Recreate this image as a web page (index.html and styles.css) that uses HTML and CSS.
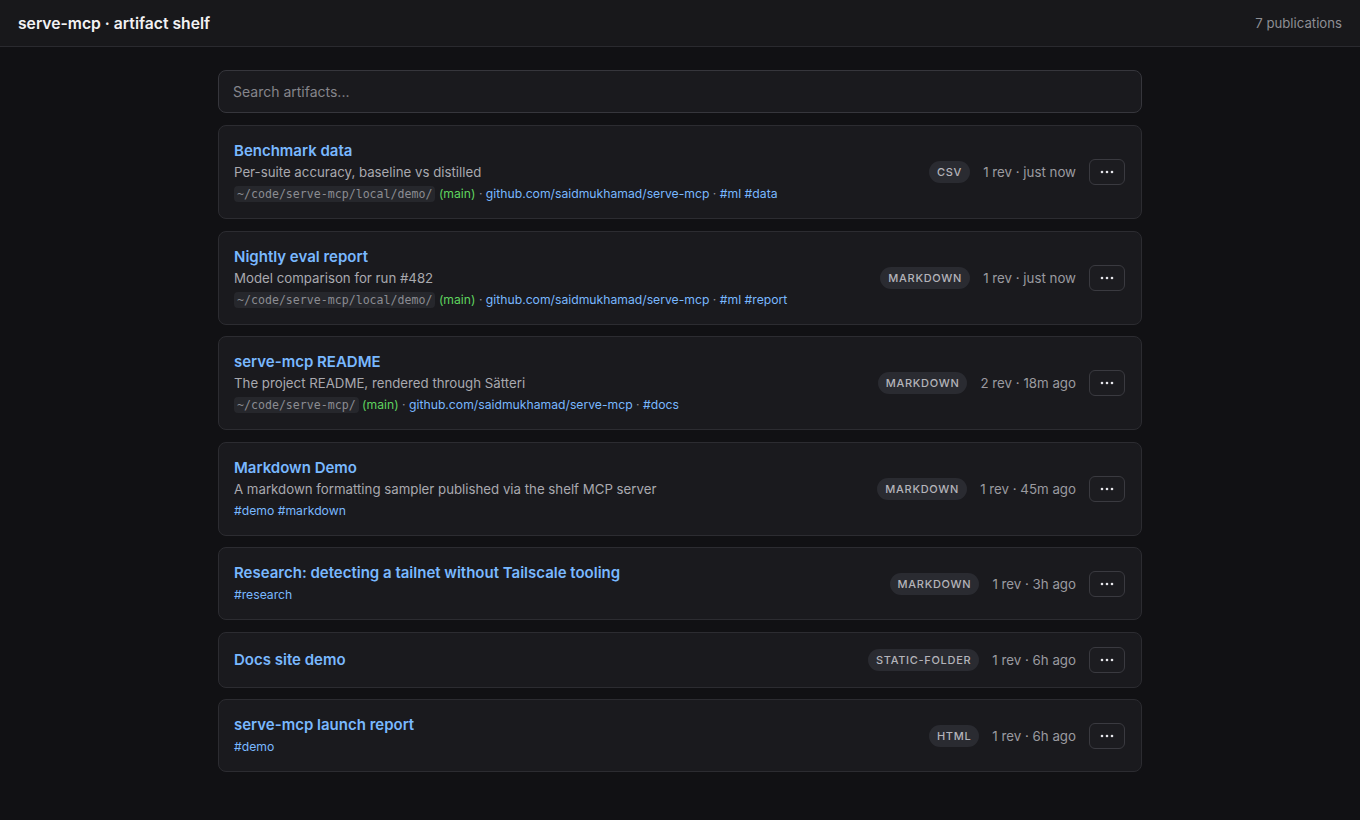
FILE: index.html
```html
<!DOCTYPE html>
<html>

<head>
	<meta charset="utf-8">
	<meta name="viewport" content="width=device-width, initial-scale=1">
	<title>serve-mcp · artifact shelf</title>
	<link rel="stylesheet" href="styles.css">
</head>

<body>
	<header class="topbar">
		<div class="brand">serve-mcp · artifact shelf</div>
		<div class="count">7 publications</div>
	</header>

	<main class="shelf">
		<input class="search" type="text" placeholder="Search artifacts...">

		<div class="card">
			<div class="info">
				<a class="title" href="#">Benchmark data</a>
				<div class="desc">Per-suite accuracy, baseline vs distilled</div>
				<div class="meta">
					<code class="path">~/code/serve-mcp/local/demo/</code>
					<span class="branch">(main)</span>
					<span class="sep">·</span>
					<a href="#">github.com/saidmukhamad/serve-mcp</a>
					<span class="sep">·</span>
					<a href="#">#ml</a> <a href="#">#data</a>
				</div>
			</div>
			<div class="side">
				<span class="kind">csv</span>
				<span class="when">1 rev · just now</span>
				<button class="more"><svg width="14" height="4" viewBox="0 0 14 4"><circle cx="2" cy="2" r="1.3"/><circle cx="7" cy="2" r="1.3"/><circle cx="12" cy="2" r="1.3"/></svg></button>
			</div>
		</div>

		<div class="card">
			<div class="info">
				<a class="title" href="#">Nightly eval report</a>
				<div class="desc">Model comparison for run #482</div>
				<div class="meta">
					<code class="path">~/code/serve-mcp/local/demo/</code>
					<span class="branch">(main)</span>
					<span class="sep">·</span>
					<a href="#">github.com/saidmukhamad/serve-mcp</a>
					<span class="sep">·</span>
					<a href="#">#ml</a> <a href="#">#report</a>
				</div>
			</div>
			<div class="side">
				<span class="kind">markdown</span>
				<span class="when">1 rev · just now</span>
				<button class="more"><svg width="14" height="4" viewBox="0 0 14 4"><circle cx="2" cy="2" r="1.3"/><circle cx="7" cy="2" r="1.3"/><circle cx="12" cy="2" r="1.3"/></svg></button>
			</div>
		</div>

		<div class="card">
			<div class="info">
				<a class="title" href="#">serve-mcp README</a>
				<div class="desc">The project README, rendered through Sätteri</div>
				<div class="meta">
					<code class="path">~/code/serve-mcp/</code>
					<span class="branch">(main)</span>
					<span class="sep">·</span>
					<a href="#">github.com/saidmukhamad/serve-mcp</a>
					<span class="sep">·</span>
					<a href="#">#docs</a>
				</div>
			</div>
			<div class="side">
				<span class="kind">markdown</span>
				<span class="when">2 rev · 18m ago</span>
				<button class="more"><svg width="14" height="4" viewBox="0 0 14 4"><circle cx="2" cy="2" r="1.3"/><circle cx="7" cy="2" r="1.3"/><circle cx="12" cy="2" r="1.3"/></svg></button>
			</div>
		</div>

		<div class="card">
			<div class="info">
				<a class="title" href="#">Markdown Demo</a>
				<div class="desc">A markdown formatting sampler published via the shelf MCP server</div>
				<div class="meta">
					<a href="#">#demo</a> <a href="#">#markdown</a>
				</div>
			</div>
			<div class="side">
				<span class="kind">markdown</span>
				<span class="when">1 rev · 45m ago</span>
				<button class="more"><svg width="14" height="4" viewBox="0 0 14 4"><circle cx="2" cy="2" r="1.3"/><circle cx="7" cy="2" r="1.3"/><circle cx="12" cy="2" r="1.3"/></svg></button>
			</div>
		</div>

		<div class="card">
			<div class="info">
				<a class="title" href="#">Research: detecting a tailnet without Tailscale tooling</a>
				<div class="meta">
					<a href="#">#research</a>
				</div>
			</div>
			<div class="side">
				<span class="kind">markdown</span>
				<span class="when">1 rev · 3h ago</span>
				<button class="more"><svg width="14" height="4" viewBox="0 0 14 4"><circle cx="2" cy="2" r="1.3"/><circle cx="7" cy="2" r="1.3"/><circle cx="12" cy="2" r="1.3"/></svg></button>
			</div>
		</div>

		<div class="card">
			<div class="info">
				<a class="title" href="#">Docs site demo</a>
			</div>
			<div class="side">
				<span class="kind">static-folder</span>
				<span class="when">1 rev · 6h ago</span>
				<button class="more"><svg width="14" height="4" viewBox="0 0 14 4"><circle cx="2" cy="2" r="1.3"/><circle cx="7" cy="2" r="1.3"/><circle cx="12" cy="2" r="1.3"/></svg></button>
			</div>
		</div>

		<div class="card">
			<div class="info">
				<a class="title" href="#">serve-mcp launch report</a>
				<div class="meta">
					<a href="#">#demo</a>
				</div>
			</div>
			<div class="side">
				<span class="kind">html</span>
				<span class="when">1 rev · 6h ago</span>
				<button class="more"><svg width="14" height="4" viewBox="0 0 14 4"><circle cx="2" cy="2" r="1.3"/><circle cx="7" cy="2" r="1.3"/><circle cx="12" cy="2" r="1.3"/></svg></button>
			</div>
		</div>
	</main>
</body>

</html>
```

FILE: styles.css
```css
body {
	margin: 0;
	background-color: #111114;
	color: #e6e6ea;
	font-family: Inter, "Noto Sans", sans-serif;
}

a {
	color: #79b8ff;
	text-decoration: none;
}

.topbar {
	display: flex;
	align-items: center;
	justify-content: space-between;
	height: 46px;
	padding: 0 18px;
	background-color: #18181b;
	border-bottom: 1px solid #2a2a2f;
}

.brand {
	font-size: 15.7px;
	font-weight: 600;
	color: #f2f2f4;
}

.count {
	font-size: 13.2px;
	color: #8e8e94;
}

.shelf {
	width: 924px;
	margin: 0 auto;
	padding: 23px 0 40px;
	display: flex;
	flex-direction: column;
	gap: 11.5px;
}

.search {
	box-sizing: border-box;
	height: 43px;
	margin-bottom: 0.5px;
	padding: 0 14px;
	background-color: #1a1a1e;
	border: 1px solid #36363c;
	border-radius: 8px;
	color: #e6e6ea;
	font-family: Inter, "Noto Sans", sans-serif;
	font-size: 14px;
	outline: none;
}

.search::placeholder {
	color: #85858b;
}

.card {
	display: flex;
	align-items: center;
	justify-content: space-between;
	padding: 14px 16px 14px 15px;
	background-color: #1a1a1e;
	border: 1px solid #2c2c31;
	border-radius: 8px;
}

.info {
	display: flex;
	flex-direction: column;
}

.title {
	font-size: 15px;
	font-weight: 600;
	line-height: 22px;
}

.desc {
	font-size: 13.25px;
	line-height: 21px;
	color: #a9a9af;
}

.meta {
	font-size: 12.2px;
	line-height: 21px;
	color: #8e8e94;
}

.path {
	padding: 1px 3px;
	line-height: 1;
	background-color: #26272c;
	border-radius: 4px;
	color: #8b8c92;
	font-family: "DejaVu Sans Mono", "Liberation Mono", monospace;
	font-size: 11.6px;
}

.branch {
	color: #5fd35f;
}

.side {
	display: flex;
	align-items: center;
	gap: 13px;
}

.kind {
	padding: 0 8px;
	height: 22px;
	line-height: 22px;
	background-color: #2a2b31;
	border-radius: 11px;
	color: #b4b4ba;
	font-size: 11px;
	font-weight: 500;
	letter-spacing: 0.7px;
	text-transform: uppercase;
}

.when {
	font-size: 13.3px;
	color: #9a9aa0;
}

.more {
	display: flex;
	align-items: center;
	justify-content: center;
	width: 36px;
	height: 26px;
	padding: 0;
	background-color: #1c1c20;
	border: 1px solid #3a3a40;
	border-radius: 6px;
	fill: #e6e6ea;
}
```
